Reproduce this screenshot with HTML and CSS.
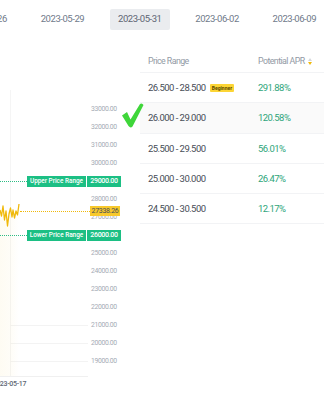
FILE: index.html
```html
<!DOCTYPE html>
<html>
<head>
<meta charset="utf-8">
<link rel="stylesheet" href="styles.css">
</head>
<body>
<div class="tabs">
  <div class="tab">2023-05-26</div>
  <div class="tab">2023-05-29</div>
  <div class="tab active">2023-05-31</div>
  <div class="tab">2023-06-02</div>
  <div class="tab">2023-06-09</div>
</div>
<div class="main">
  <div class="chart">
    <div class="plot">
      <div class="vgrid"></div>
      <div class="hgrid g1"></div>
      <div class="hgrid g2"></div>
      <div class="hgrid g3"></div>
      <svg class="line" width="88" height="337" viewBox="0 0 88 337">
        <defs>
          <linearGradient id="fill" x1="0" y1="0" x2="1" y2="0">
            <stop offset="0" stop-color="#f0b90b" stop-opacity="0.05"/>
            <stop offset="0.6" stop-color="#f0b90b" stop-opacity="0.03"/>
            <stop offset="1" stop-color="#f0b90b" stop-opacity="0"/>
          </linearGradient>
        </defs>
        <path d="M0,170 L1.5,176 L3,166 L4.5,180 L6,171 L7.5,186 L9,174 L10.5,168 L12,177 L13,170 L14.5,178 L16,171 L17.5,175 L19,164 L19,337 L0,337 Z" fill="url(#fill)"/>
        <polyline points="0,170 1.5,176 3,166 4.5,180 6,171 7.5,186 9,174 10.5,168 12,177 13,170 14.5,178 16,171 17.5,175 19,164" fill="none" stroke="#f0b90b" stroke-width="1.3" stroke-linejoin="round"/>
      </svg>
      <div class="dash upper"></div>
      <div class="dash lower"></div>
      <div class="dash price"></div>
    </div>
    <div class="axis">
      <span>33000.00</span><span>32000.00</span><span>31000.00</span><span>30000.00</span><span>29000.00</span><span>28000.00</span><span>27000.00</span><span>26000.00</span><span>25000.00</span><span>24000.00</span><span>23000.00</span><span>22000.00</span><span>21000.00</span><span>20000.00</span><span>19000.00</span>
    </div>
    <div class="xlabel">2023-05-17</div>
    <div class="tag tag-upper"><span class="tag-name">Upper Price Range</span><span class="tag-val">29000.00</span></div>
    <div class="tag tag-lower"><span class="tag-name">Lower Price Range</span><span class="tag-val">26000.00</span></div>
    <div class="cur">27338.26</div>
    <svg class="check" width="24" height="27" viewBox="0 0 24 27">
      <path d="M1,13.5 L6,10 L9.5,17.5 L19,2 Q21,0.5 22.5,3 L11.5,24.5 Q9.5,26.5 7.5,24 Z" fill="#3fd63a"/>
    </svg>
  </div>
  <div class="table">
    <div class="row head">
      <div class="c1">Price Range</div>
      <div class="c2">Potential APR <span class="sort"><i class="up"></i><i class="down"></i></span></div>
    </div>
    <div class="row">
      <div class="c1">26.500 - 28.500 <span class="badge">Beginner</span></div>
      <div class="c2 apr">291.88%</div>
    </div>
    <div class="row hl">
      <div class="c1">26.000 - 29.000</div>
      <div class="c2 apr">120.58%</div>
    </div>
    <div class="row">
      <div class="c1">25.500 - 29.500</div>
      <div class="c2 apr">56.01%</div>
    </div>
    <div class="row">
      <div class="c1">25.000 - 30.000</div>
      <div class="c2 apr">26.47%</div>
    </div>
    <div class="row">
      <div class="c1">24.500 - 30.500</div>
      <div class="c2 apr">12.17%</div>
    </div>
  </div>
</div>
</body>
</html>
```
FILE: styles.css
```css
* { box-sizing: border-box; }
html, body {
  margin: 0;
  padding: 0;
  background: #ffffff;
  overflow: hidden;
}
body {
  width: 324px;
  height: 400px;
  font-family: "Roboto", "Liberation Sans", sans-serif;
  color: #474d57;
}
.tabs {
  display: flex;
  gap: 17.8px;
  margin-left: -44.6px;
  padding-top: 9px;
  height: 40px;
  white-space: nowrap;
}
.tab {
  flex: 0 0 59.5px;
  height: 20.5px;
  line-height: 20.5px;
  text-align: center;
  font-size: 9.5px;
  letter-spacing: -0.45px;
  color: #707a8a;
  border-radius: 2px;
}
.tab.active {
  background: #eaecef;
  color: #5e6673;
}
.main {
  display: flex;
}
.chart {
  position: relative;
  flex: 0 0 140px;
  height: 360px;
  display: flex;
}
.plot {
  position: relative;
  width: 88px;
  height: 337px;
  flex: 0 0 88px;
}
.vgrid {
  position: absolute;
  left: 10px;
  top: 50px;
  bottom: 0;
  width: 1px;
  background: #f5f5f5;
}
.hgrid {
  position: absolute;
  left: 10px;
  right: 0;
  height: 1px;
  background: #f3f3f3;
}
.g1 { top: 285px; }
.g2 { top: 303px; }
.g3 { top: 321px; }
.plot::after {
  content: "";
  position: absolute;
  left: 0;
  right: 0;
  bottom: 0;
  height: 1px;
  background: #f0f0f0;
}
.line {
  position: absolute;
  left: 0;
  top: 0;
}
.dash {
  position: absolute;
  height: 0;
}
.dash.upper { left: 0; width: 27px; top: 141px; border-top: 1px dotted #2ebd85; }
.dash.lower { left: 0; width: 27px; top: 195px; border-top: 1px dotted #2ebd85; }
.dash.price { left: 20px; width: 70px; top: 171px; border-top: 1px dotted #f0b90b; }
.axis {
  display: flex;
  flex-direction: column;
  padding-top: 60px;
  padding-left: 3px;
  font-size: 6.8px;
  letter-spacing: -0.35px;
  color: #a5abb5;
}
.axis span {
  height: 18px;
  line-height: 18px;
}
.xlabel {
  position: absolute;
  left: -7.5px;
  top: 339px;
  font-size: 7px;
  letter-spacing: -0.3px;
  color: #5e6673;
  font-weight: 500;
  line-height: 10px;
}
.tag {
  position: absolute;
  display: flex;
  gap: 1px;
  height: 11px;
  line-height: 11px;
  color: #ffffff;
}
.tag-upper { left: 27px; top: 136px; }
.tag-lower { left: 27px; top: 190px; }
.tag-name {
  background: #1cbf84;
  width: 59px;
  text-align: center;
  font-size: 6.4px;
  font-weight: 500;
}
.tag-val {
  background: #1cbf84;
  width: 34px;
  text-align: center;
  font-size: 7px;
  letter-spacing: -0.3px;
  font-weight: 500;
}
.cur {
  position: absolute;
  left: 90px;
  top: 166px;
  width: 30px;
  height: 10px;
  line-height: 10px;
  text-align: center;
  background: #f8c92c;
  color: #474d57;
  font-size: 7px;
  letter-spacing: -0.3px;
}
.check {
  position: absolute;
  left: 121px;
  top: 62px;
}
.table {
  flex: 1;
  padding-top: 10px;
}
.row {
  display: flex;
  align-items: center;
  height: 30.3px;
  border-bottom: 1px solid #f2f3f5;
  font-size: 9.5px;
  letter-spacing: -0.55px;
  color: #474d57;
}
.row.head {
  height: 23px;
  font-size: 8.8px;
  letter-spacing: -0.55px;
  color: #929aa5;
}
.row.hl { background: #fafafa; }
.c1 {
  width: 118px;
  padding-left: 8px;
  display: flex;
  align-items: center;
  white-space: pre;
}
.c2 {
  flex: 1;
  display: flex;
  align-items: center;
}
.apr { color: #2ea57a; }
.badge {
  display: inline-block;
  margin-left: 3px;
  background: #fcd535;
  color: #5c4a00;
  font-size: 5px;
  letter-spacing: 0;
  font-weight: bold;
  height: 8px;
  line-height: 8px;
  padding: 0 1.5px;
  border-radius: 1px;
}
.sort {
  display: inline-flex;
  flex-direction: column;
  gap: 1px;
  margin-left: 3px;
}
.sort i {
  display: block;
  width: 0;
  height: 0;
  border-left: 2px solid transparent;
  border-right: 2px solid transparent;
}
.sort .up { border-bottom: 3px solid #d5d8dc; }
.sort .down { border-top: 3px solid #f0b90b; }
```
